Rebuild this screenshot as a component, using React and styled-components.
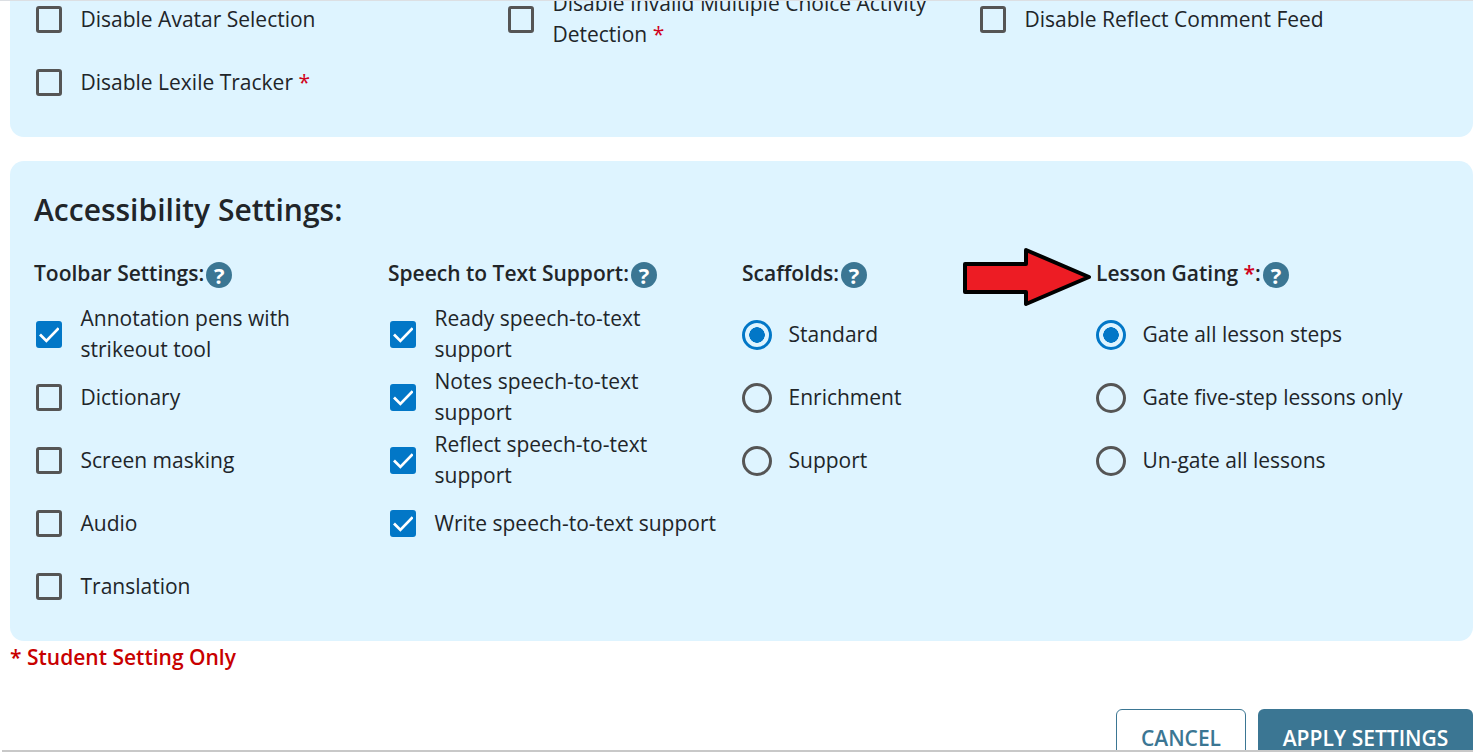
import React from 'react';
import styled, { createGlobalStyle } from 'styled-components';

const displayOptions = [
  { label: 'Disable Avatar Selection' },
  { label: 'Disable Invalid Multiple Choice Activity Detection', required: true },
  { label: 'Disable Reflect Comment Feed' },
  { label: 'Disable Lexile Tracker', required: true },
];

const columns = [
  {
    title: 'Toolbar Settings:',
    type: 'check',
    options: [
      { label: 'Annotation pens with strikeout tool', on: true },
      { label: 'Dictionary' },
      { label: 'Screen masking' },
      { label: 'Audio' },
      { label: 'Translation' },
    ],
  },
  {
    title: 'Speech to Text Support:',
    type: 'check',
    options: [
      { label: 'Ready speech-to-text support', on: true },
      { label: 'Notes speech-to-text support', on: true },
      { label: 'Reflect speech-to-text support', on: true },
      { label: 'Write speech-to-text support', on: true },
    ],
  },
  {
    title: 'Scaffolds:',
    type: 'radio',
    options: [
      { label: 'Standard', on: true },
      { label: 'Enrichment' },
      { label: 'Support' },
    ],
  },
  {
    title: 'Lesson Gating',
    required: true,
    type: 'radio',
    options: [
      { label: 'Gate all lesson steps', on: true },
      { label: 'Gate five-step lessons only' },
      { label: 'Un-gate all lessons' },
    ],
  },
];

const Control = ({ type, on }) => (type === 'radio' ? (
  <Radio $on={on} />
) : (
  <Checkbox $on={on}>
    {on && (
      <svg width="21" height="21" viewBox="0 0 21 21" fill="none">
        <path d="M1 10.5l6.5 6.5L20 4" stroke="#fff" strokeWidth="2.8" />
      </svg>
    )}
  </Checkbox>
));

const Option = ({ type = 'check', label, on, required, wide }) => (
  <Row>
    <ControlSlot><Control type={type} on={on} /></ControlSlot>
    <RowLabel $wide={wide}>
      {label}
      {required && <Star> *</Star>}
    </RowLabel>
  </Row>
);

const App = () => (
  <Page>
    <GlobalStyle />
    <TopRule />
    <Viewport>
      <Content>
        <TopPanel>
          <TopGrid>
            {displayOptions.map(({ label, required }) => (
              <Option key={label} label={label} required={required} wide />
            ))}
          </TopGrid>
        </TopPanel>
        <SettingsPanel>
          <PanelTitle>Accessibility Settings:</PanelTitle>
          <SettingsGrid>
            {columns.map(({ title, required, type, options }) => (
              <div key={title}>
                <ColumnTitle>
                  {title}
                  {required && <Star> *</Star>}
                  {required && ':'}
                  <Help>?</Help>
                </ColumnTitle>
                {options.map(({ label, on }) => (
                  <Option key={label} type={type} label={label} on={on} />
                ))}
              </div>
            ))}
          </SettingsGrid>
          <Arrow width="130" height="60" viewBox="0 0 130 60">
            <path
              d="M2 16H63V2L126 29L63 56V44H2Z"
              fill="#ed1c24"
              stroke="#000"
              strokeWidth="4"
              strokeLinejoin="round"
            />
          </Arrow>
        </SettingsPanel>
        <Footnote>* Student Setting Only</Footnote>
        <Actions>
          <CancelButton type="button">CANCEL</CancelButton>
          <ApplyButton type="button">APPLY SETTINGS</ApplyButton>
        </Actions>
      </Content>
    </Viewport>
    <BottomRule />
  </Page>
);

const GlobalStyle = createGlobalStyle`
  html, body {
    margin: 0;
    height: 100%;
    overflow: hidden;
    background: #fff;
  }
  * {
    box-sizing: border-box;
  }
`;

const Page = styled.div`
  display: flex;
  flex-direction: column;
  height: 752px;
  font-family: "Open Sans", sans-serif;
  font-size: 21px;
  line-height: 31px;
  color: #212529;
`;

const TopRule = styled.div`
  flex: none;
  height: 1px;
  background: #dcdfe3;
`;

const BottomRule = styled.div`
  flex: none;
  height: 2px;
  margin-left: 2px;
  background: #c8c8c8;
`;

const Viewport = styled.div`
  flex: 1;
  min-height: 0;
  overflow: hidden;
`;

const Content = styled.div`
  margin-top: -13px;
  padding-left: 10px;
`;

const Panel = styled.section`
  background: #def4ff;
`;

const TopPanel = styled(Panel)`
  height: 149px;
  padding: 0 24px;
  border-radius: 0 0 14px 14px;
`;

const TopGrid = styled.div`
  display: grid;
  grid-template-columns: repeat(3, 472px);
  grid-auto-rows: 63px;
`;

const SettingsPanel = styled(Panel)`
  position: relative;
  height: 480px;
  margin-top: 24px;
  padding: 29px 24px 0;
  border-radius: 14px;
`;

const PanelTitle = styled.h2`
  margin: 0;
  font-size: 30px;
  line-height: 40px;
  font-weight: 600;
`;

const SettingsGrid = styled.div`
  display: grid;
  grid-template-columns: repeat(4, 354px);
  margin-top: 31px;
`;

const ColumnTitle = styled.h3`
  display: flex;
  align-items: center;
  height: 26px;
  margin: 0 0 16px;
  padding-bottom: 2px;
  font-size: 21px;
  font-weight: 600;
  white-space: pre;
`;

const Help = styled.span`
  display: flex;
  flex: none;
  align-items: center;
  justify-content: center;
  width: 26px;
  height: 26px;
  margin: 4px 0 0 2px;
  border-radius: 50%;
  background: #3b7693;
  color: #fff;
  font-size: 22px;
  font-weight: 700;
`;

const Star = styled.span`
  color: #d0021b;
`;

const Row = styled.div`
  display: flex;
  align-items: center;
  height: 63px;
`;

const ControlSlot = styled.div`
  flex: none;
  display: flex;
  width: 30px;
  margin-right: 16.5px;
`;

const RowLabel = styled.div`
  max-width: ${({ $wide }) => ($wide ? '420px' : '284px')};
  margin-top: -1px;
`;

const Checkbox = styled.span`
  display: flex;
  align-items: center;
  justify-content: center;
  width: 26.66px;
  height: 26.66px;
  margin-left: 1.67px;
  border: 3px solid ${({ $on }) => ($on ? '#0277c7' : '#555')};
  border-radius: 3px;
  background: ${({ $on }) => ($on ? '#0277c7' : 'transparent')};
`;

const Radio = styled.span`
  width: 30px;
  height: 30px;
  border: 3px solid ${({ $on }) => ($on ? '#0277c7' : '#555')};
  border-radius: 50%;
  background: ${({ $on }) => ($on ? 'radial-gradient(circle, #0277c7 0 7.5px, transparent 8px)' : 'transparent')};
`;

const Arrow = styled.svg`
  position: absolute;
  left: 953px;
  top: 87px;
`;

const Footnote = styled.p`
  margin: 1px 0 0;
  font-size: 21px;
  font-weight: 600;
  color: #c80000;
`;

const Actions = styled.div`
  display: flex;
  justify-content: flex-end;
  gap: 12px;
  margin-top: 36px;
`;

const Button = styled.button`
  height: 62px;
  padding: 0 0 4px;
  border-radius: 6px;
  font-family: inherit;
  font-size: 21px;
  font-weight: 600;
  line-height: 31px;
`;

const CancelButton = styled(Button)`
  width: 130px;
  border: 1px solid #3b7693;
  background: #fff;
  color: #3b7693;
`;

const ApplyButton = styled(Button)`
  width: 215px;
  border: 0;
  background: #3b7693;
  color: #fff;
`;

export default App;
